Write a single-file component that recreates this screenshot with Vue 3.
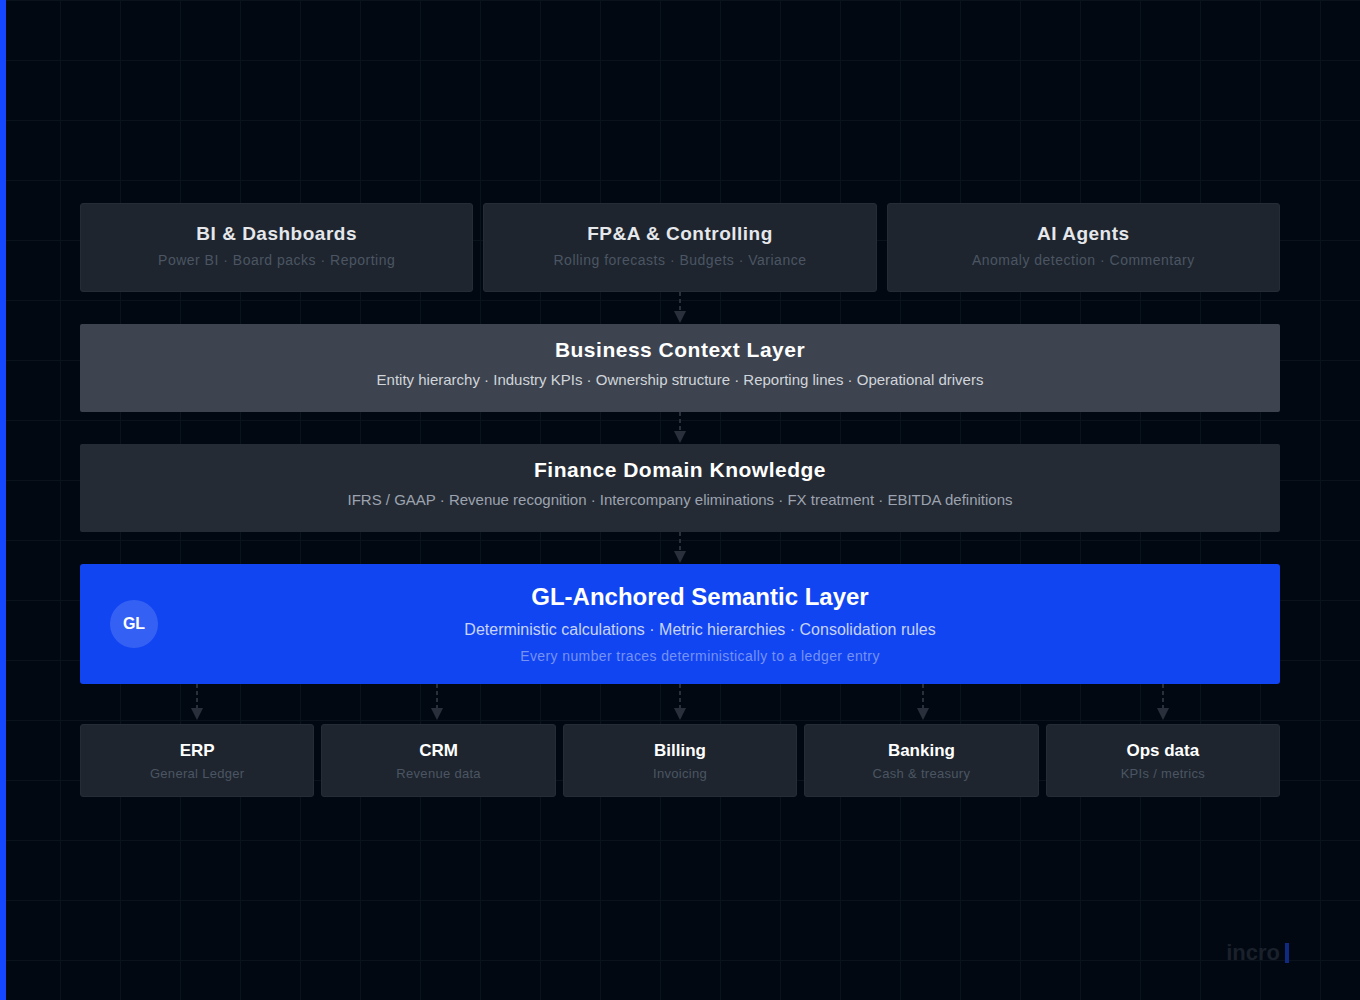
<script setup>
const topCards = [
  { title: "BI & Dashboards", sub: "Power BI · Board packs · Reporting" },
  { title: "FP&A & Controlling", sub: "Rolling forecasts · Budgets · Variance" },
  { title: "AI Agents", sub: "Anomaly detection · Commentary" },
];

const sources = [
  { title: "ERP", sub: "General Ledger" },
  { title: "CRM", sub: "Revenue data" },
  { title: "Billing", sub: "Invoicing" },
  { title: "Banking", sub: "Cash & treasury" },
  { title: "Ops data", sub: "KPIs / metrics" },
];
</script>

<template>
  <div class="slide">
    <div class="accent"></div>

    <div class="stack">
      <div class="top-row">
        <div v-for="card in topCards" :key="card.title" class="top-card">
          <h3>{{ card.title }}</h3>
          <p>{{ card.sub }}</p>
        </div>
      </div>

      <div class="link">
        <svg class="arrow" width="14" height="32" viewBox="0 0 14 32">
          <line x1="7" y1="0" x2="7" y2="20" />
          <polygon points="1,19 13,19 7,31" />
        </svg>
      </div>

      <div class="layer layer-context">
        <h2>Business Context Layer</h2>
        <p>Entity hierarchy · Industry KPIs · Ownership structure · Reporting lines · Operational drivers</p>
      </div>

      <div class="link">
        <svg class="arrow" width="14" height="32" viewBox="0 0 14 32">
          <line x1="7" y1="0" x2="7" y2="20" />
          <polygon points="1,19 13,19 7,31" />
        </svg>
      </div>

      <div class="layer layer-domain">
        <h2>Finance Domain Knowledge</h2>
        <p>IFRS / GAAP · Revenue recognition · Intercompany eliminations · FX treatment · EBITDA definitions</p>
      </div>

      <div class="link">
        <svg class="arrow" width="14" height="32" viewBox="0 0 14 32">
          <line x1="7" y1="0" x2="7" y2="20" />
          <polygon points="1,19 13,19 7,31" />
        </svg>
      </div>

      <div class="semantic">
        <div class="badge">GL</div>
        <div class="semantic-text">
          <h2>GL-Anchored Semantic Layer</h2>
          <p class="semantic-sub">Deterministic calculations · Metric hierarchies · Consolidation rules</p>
          <p class="semantic-note">Every number traces deterministically to a ledger entry</p>
        </div>
      </div>

      <div class="source-links">
        <svg v-for="s in sources" :key="s.title" class="arrow" width="14" height="40" viewBox="0 0 14 40">
          <line x1="7" y1="0" x2="7" y2="25" />
          <polygon points="1,24 13,24 7,36" />
        </svg>
      </div>

      <div class="source-row">
        <div v-for="s in sources" :key="s.title" class="source">
          <h4>{{ s.title }}</h4>
          <p>{{ s.sub }}</p>
        </div>
      </div>
    </div>

    <div class="logo">
      <span>incro</span>
      <i></i>
    </div>
  </div>
</template>

<style>
html,
body {
  margin: 0;
  background: #010812;
}
</style>

<style scoped>
.slide {
  position: relative;
  box-sizing: border-box;
  width: 1360px;
  height: 1000px;
  overflow: hidden;
  display: flex;
  flex-direction: column;
  justify-content: center;
  padding: 0 80px;
  font-family: "Liberation Sans", Arial, sans-serif;
  background-color: #010812;
  background-image:
    linear-gradient(#0a121c 1px, transparent 1px),
    linear-gradient(90deg, #0a121c 1px, transparent 1px);
  background-size: 60px 60px;
}

.accent {
  position: absolute;
  left: 0;
  top: 0;
  bottom: 0;
  width: 6px;
  background: #1447ff;
}

h2,
h3,
h4,
p {
  margin: 0;
}

.stack {
  display: flex;
  flex-direction: column;
}

.top-row {
  display: grid;
  grid-template-columns: repeat(3, 1fr);
  gap: 10px;
}

.top-card {
  box-sizing: border-box;
  height: 89px;
  padding-top: 19px;
  text-align: center;
  background: #1e252e;
  border: 1px solid #252c35;
  border-radius: 3px;
}

.top-card h3 {
  font-size: 19px;
  line-height: 22px;
  font-weight: 700;
  letter-spacing: 0.5px;
  color: #e5e7eb;
}

.top-card p {
  margin-top: 6px;
  font-size: 14px;
  line-height: 18px;
  letter-spacing: 0.5px;
  color: #4b5563;
}

.link {
  display: flex;
  justify-content: center;
  height: 32px;
}

.link:first-of-type {
  margin-top: -1px;
}

.arrow line {
  stroke: #2a303b;
  stroke-width: 2;
  stroke-dasharray: 4 3;
}

.arrow polygon {
  fill: #2a303b;
}

.layer {
  box-sizing: border-box;
  height: 88px;
  padding-top: 14px;
  text-align: center;
  border-radius: 2px;
}

.layer h2 {
  font-size: 21px;
  line-height: 24px;
  font-weight: 700;
  letter-spacing: 0.5px;
  color: #ffffff;
}

.layer p {
  margin-top: 8px;
  font-size: 15px;
  line-height: 20px;
}

.layer-context {
  background: #3d444f;
}

.layer-context p {
  color: #d1d5db;
}

.layer-domain {
  background: #252b35;
}

.layer-domain p {
  color: #9ca3af;
}

.semantic {
  box-sizing: border-box;
  height: 120px;
  display: flex;
  align-items: center;
  padding: 0 38px 0 30px;
  background: #1245f2;
  border-radius: 3px;
}

.badge {
  flex: none;
  width: 48px;
  height: 48px;
  border-radius: 50%;
  display: flex;
  align-items: center;
  justify-content: center;
  background: rgba(255, 255, 255, 0.15);
  color: #ffffff;
  font-size: 16px;
  font-weight: 700;
}

.semantic-text {
  flex: 1;
  text-align: center;
}

.semantic-text h2 {
  font-size: 24px;
  line-height: 28px;
  font-weight: 700;
  color: #ffffff;
}

.semantic-sub {
  margin-top: 9px;
  font-size: 16px;
  line-height: 20px;
  color: #c7d4fb;
}

.semantic-note {
  margin-top: 6px;
  font-size: 14px;
  line-height: 20px;
  letter-spacing: 0.4px;
  color: #7592f5;
}

.source-links {
  display: flex;
  justify-content: center;
  height: 40px;
}

.source-links .arrow:nth-child(2),
.source-links .arrow:nth-child(5) {
  margin-left: 226px;
}

.source-links .arrow:nth-child(3),
.source-links .arrow:nth-child(4) {
  margin-left: 229px;
}

.source-row {
  display: flex;
  gap: 7px;
}

.source {
  box-sizing: border-box;
  flex: 1;
  height: 73px;
  padding-top: 16px;
  text-align: center;
  background: #1e252e;
  border: 1px solid #252c35;
  border-radius: 3px;
}

.source h4 {
  font-size: 17px;
  line-height: 20px;
  font-weight: 700;
  color: #ffffff;
}

.source p {
  margin-top: 5px;
  font-size: 13px;
  line-height: 16px;
  letter-spacing: 0.3px;
  color: #4b5563;
}

.logo {
  position: absolute;
  right: 71px;
  bottom: 37px;
  display: flex;
  align-items: center;
  gap: 5px;
}

.logo span {
  font-size: 22px;
  line-height: 20px;
  font-weight: 700;
  color: #1a212b;
}

.logo i {
  width: 4px;
  height: 20px;
  background: #0f2a80;
}
</style>
